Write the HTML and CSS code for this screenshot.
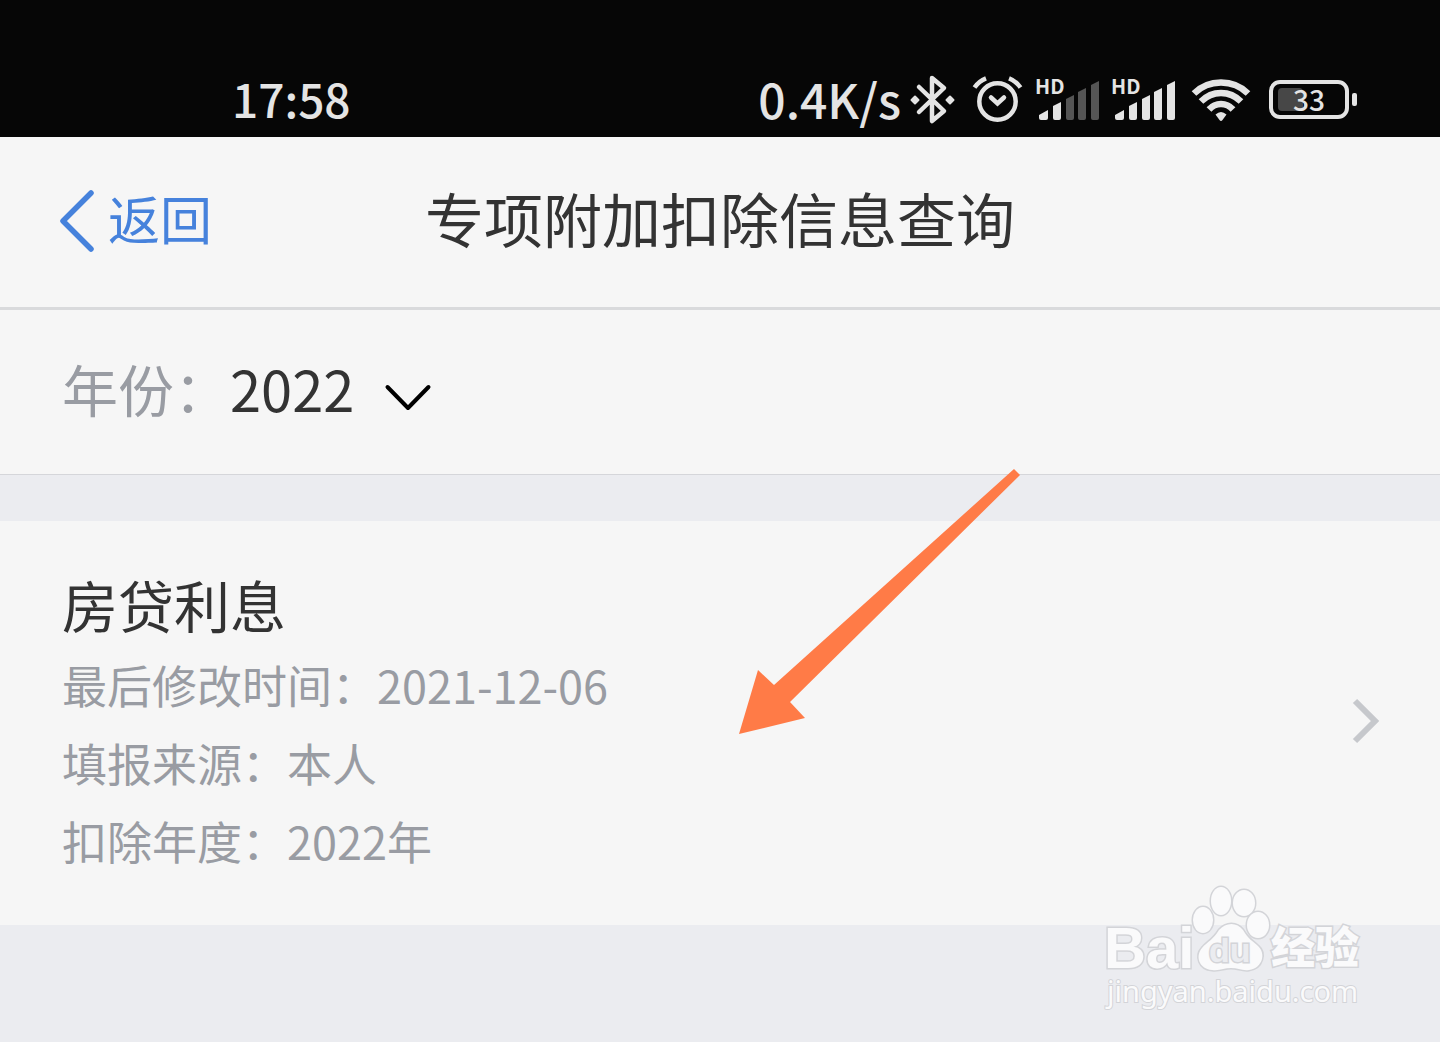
FILE: index.html
```html
<!DOCTYPE html>
<html lang="zh-CN">
<head>
<meta charset="utf-8">
<meta name="viewport" content="width=device-width, initial-scale=1">
<title>专项附加扣除信息查询</title>
<link rel="stylesheet" href="styles.css">
</head>
<body>
<div class="status-bar">
  <time class="clock">17:58</time>
  <div class="indicators">
    <div class="network">
      <span class="speed">0.4K/s</span>
      <svg class="bluetooth" width="48" height="50" viewBox="0 0 48 50" aria-hidden="true">
        <path d="M8 12 33 36 21 46V3L33 13 8 37" fill="none" stroke="currentColor" stroke-width="4.500" stroke-linecap="round" stroke-linejoin="round"/>
        <path d="M4 21.500 7.500 25 4 28.500 0.500 25ZM39 21.500 42.500 25 39 28.500 35.500 25Z" fill="currentColor" stroke="currentColor" stroke-width="2" stroke-linejoin="round"/>
      </svg>
    </div>
    <svg width="50" height="50" viewBox="0 0 50 50" fill="none" stroke="currentColor" stroke-width="4.500" aria-hidden="true">
      <circle cx="24.500" cy="26.500" r="18.200"/>
      <path d="M18 22.500 24.500 28.500 31 22.500" stroke-linecap="round"/>
      <path d="M1.500 12.500Q6 6 13 3.300M36 3.300Q43 6 47.500 12.500"/>
    </svg>
    <svg width="62" height="50" viewBox="0 0 62 50" fill="currentColor" aria-label="信号">
      <text class="hd" x="-2" y="19">HD</text>
      <path d="M2 40 11 35V43Q11 45 9 45H4Q2 45 2 43ZM16 31 24 27V43Q24 45 22 45H18Q16 45 16 43Z"/>
      <path opacity=".36" d="M29 24 37 20V43Q37 45 35 45H31Q29 45 29 43ZM41 17 49 13V43Q49 45 47 45H43Q41 45 41 43ZM54 10 62 6V43Q62 45 60 45H56Q54 45 54 43Z"/>
    </svg>
    <svg width="62" height="50" viewBox="0 0 62 50" fill="currentColor" aria-label="信号">
      <text class="hd" x="-2" y="19">HD</text>
      <path d="M2 40 11 35V43Q11 45 9 45H4Q2 45 2 43ZM16 31 24 27V43Q24 45 22 45H18Q16 45 16 43ZM29 24 37 20V43Q37 45 35 45H31Q29 45 29 43ZM41 17 49 13V43Q49 45 47 45H43Q41 45 41 43ZM54 10 62 6V43Q62 45 60 45H56Q54 45 54 43Z"/>
    </svg>
    <svg width="66" height="50" viewBox="0 0 66 50" fill="none" stroke="currentColor" stroke-width="6.500" aria-hidden="true">
      <path d="M5 18.500Q16 7.500 32 7.500T59 18.500M12 26.500Q20.500 18 32 18T52 26.500M20 34.500Q25 29 32 29T44 34.500"/>
      <path d="M26.500 39.500Q32 34.500 37.500 39.500L33.500 45Q32 47 30.500 45Z" fill="currentColor" stroke="none"/>
    </svg>
    <svg width="88" height="50" viewBox="0 0 88 50" aria-label="电量">
      <rect x="9" y="13" width="25" height="23" rx="4" fill="#474747"/>
      <rect x="2" y="7" width="76" height="35" rx="9" fill="none" stroke="currentColor" stroke-width="4"/>
      <rect x="83" y="18" width="5" height="13" rx="2" fill="currentColor"/>
      <text class="charge" x="40" y="36" text-anchor="middle" fill="currentColor">33</text>
    </svg>
  </div>
</div>

<header class="nav">
  <a class="back" href="#">
    <svg width="34" height="62" viewBox="0 0 34 62" fill="none" stroke="currentColor" stroke-width="5.500" stroke-linecap="round" stroke-linejoin="round" aria-hidden="true"><path d="M31 3 3 31 31 59"/></svg>
    <span>返回</span>
  </a>
  <h1>专项附加扣除信息查询</h1>
</header>

<main>
  <form class="filter">
    <label for="year">年份：</label>
    <div class="picker">
      <select id="year"><option>2022</option></select>
      <svg width="46" height="28" viewBox="0 0 46 28" fill="none" stroke="#000" stroke-width="4" stroke-linecap="round" stroke-linejoin="round" aria-hidden="true"><path d="M2.500 3 23 24 43.500 3"/></svg>
    </div>
  </form>

  <a class="record" href="#">
    <div class="record-text">
      <h2>房贷利息</h2>
      <p>最后修改时间：2021-12-06</p>
      <p>填报来源：本人</p>
      <p>扣除年度：2022年</p>
    </div>
    <svg width="28" height="44" viewBox="0 0 28 44" fill="none" stroke="#c6c8cc" stroke-width="6" aria-hidden="true"><path d="M3 2 23 22 3 42"/></svg>
  </a>
</main>

<svg class="pointer" width="282" height="266" viewBox="0 0 282 266" aria-hidden="true">
  <path d="M275 0 281 6 51 233 66 249 0 265 19 201 35 216Z" fill="#ff7b47"/>
</svg>

<div class="watermark">
  <svg width="264" height="136" viewBox="0 0 264 136" aria-label="Baidu 经验">
    <g class="mark">
      <text class="brand" x="4" y="88">Bai</text>
      <ellipse cx="103" cy="40" rx="10" ry="13"/>
      <ellipse cx="121" cy="21" rx="10" ry="14"/>
      <ellipse cx="144" cy="23" rx="11" ry="13"/>
      <ellipse cx="158" cy="45" rx="11" ry="13"/>
      <path d="M119 58C126 50 137 50 143 58C148 67 154 70 158 74C166 81 163 96 149 98C142 99 138 96 131 96C124 96 120 99 112 98C99 97 95 84 102 76C107 70 114 67 119 58Z" transform="translate(0 -8)"/>
      <text class="paw" x="109" y="82">du</text>
      <text class="chinese" x="171" y="84">经验</text>
      <text class="site" x="7" y="122">jingyan.baidu.com</text>
    </g>
  </svg>
</div>
</body>
</html>
```
FILE: styles.css
```css
* {
  box-sizing: border-box;
}

body {
  position: relative;
  min-height: 100vh;
  margin: 0;
  background: #ebecf0;
  color: #333;
  font-family: "Noto Sans CJK SC", "Noto Sans", sans-serif;
}

svg {
  display: block;
  flex: none;
  overflow: visible;
}

a {
  color: inherit;
  text-decoration: none;
}

h1,
h2,
p {
  margin: 0;
  font-weight: 400;
}

.status-bar {
  display: flex;
  align-items: center;
  justify-content: space-between;
  padding: 75px 83px 12px 232px;
  background: #060606;
  color: #e4e4e4;
  font-size: 46px;
  font-weight: 500;
  line-height: 46px;
}

.clock,
.speed {
  padding-bottom: 4px;
}

.speed {
  font-size: 48px;
}

.indicators {
  display: flex;
  align-items: center;
  gap: 14px;
}

.network {
  display: flex;
  align-items: center;
  gap: 10px;
}

.hd {
  font: 700 20px "Noto Sans CJK SC", sans-serif;
}

.charge {
  font: 500 28px "Noto Sans CJK SC", sans-serif;
}

.nav {
  display: grid;
  grid-template-columns: 1fr auto 1fr;
  align-items: center;
  padding: 39px 60px 47px;
  border-bottom: 3px solid #d9dadc;
  background: #f6f6f6;
}

.back {
  display: flex;
  align-items: center;
  gap: 14px;
  color: #4682dc;
  font-size: 52px;
  line-height: 84px;
}

.back svg {
  margin-top: 6px;
}

.nav h1 {
  font-size: 59px;
  line-height: 84px;
}

.filter {
  display: flex;
  align-items: center;
  padding: 36px 62px 44px;
  border-bottom: 1px solid #d5d6da;
  background: #f6f6f6;
  font-size: 56px;
  line-height: 84px;
}

.filter label {
  color: #999ca3;
}

.picker {
  display: grid;
  align-items: center;
}

.picker select,
.picker svg {
  grid-area: 1 / 1;
}

.picker select {
  padding: 0 76px 0 0;
  border: 0;
  appearance: none;
  background: transparent;
  color: #333;
  font: inherit;
}

.picker svg {
  justify-self: end;
  margin-top: 20px;
  pointer-events: none;
}

.record {
  display: flex;
  align-items: center;
  justify-content: space-between;
  margin-top: 46px;
  padding: 41px 60px 45px 62px;
  background: #f6f6f6;
}

.record h2 {
  font-size: 56px;
  line-height: 84px;
}

.record p {
  color: #999ca3;
  font-size: 45px;
  line-height: 78px;
}

.pointer {
  position: absolute;
  top: 469px;
  left: 739px;
  pointer-events: none;
}

.watermark {
  position: absolute;
  right: 76px;
  bottom: 26px;
  pointer-events: none;
}

.mark {
  fill: #fafafb;
  stroke: #d3d4d8;
  stroke-width: 3px;
  paint-order: stroke;
}

.brand {
  font: 700 58px "Liberation Sans", sans-serif;
}

.paw {
  fill: #ebecf0;
  font: 700 34px "Liberation Sans", sans-serif;
}

.chinese {
  font: 900 44px "Noto Sans CJK SC", sans-serif;
}

.site {
  stroke-width: 2px;
  font: 400 29px "Noto Sans", sans-serif;
}
```
